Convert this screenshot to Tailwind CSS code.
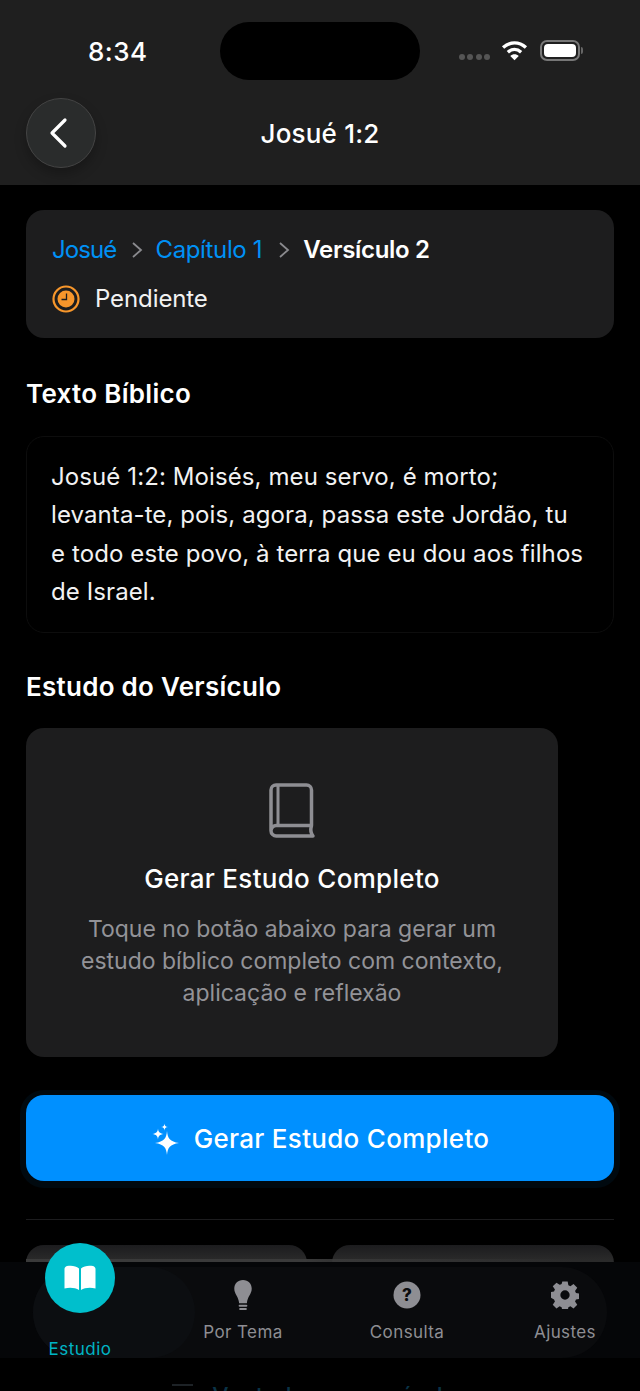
<!DOCTYPE html>
<html lang="pt">
<head>
<meta charset="utf-8">
<script src="https://cdn.jsdelivr.net/npm/@tailwindcss/browser@4"></script>
</head>
<body class="bg-black">
<div class="relative h-[1391px] w-[640px] overflow-hidden bg-black font-['Inter',sans-serif] text-white">
  <header class="relative h-[185px] bg-[#1f1f1f]">
    <div class="flex h-[100px] items-start justify-between pl-[88px] pr-[57px] pt-[22px]">
      <span class="mt-[14px] text-[26px] leading-[32px] font-medium tracking-[0.5px]">8:34</span>
      <div class="absolute left-[220px] top-[22px] h-[58px] w-[200px] rounded-[29px] bg-black"></div>
      <div class="flex items-center pt-[18px]">
        <div class="mt-[13px] flex gap-[2.4px]">
          <i class="size-[6px] rounded-full bg-[#555]"></i><i class="size-[6px] rounded-full bg-[#555]"></i><i class="size-[6px] rounded-full bg-[#555]"></i><i class="size-[6px] rounded-full bg-[#555]"></i>
        </div>
        <svg class="ml-[11px]" width="27" height="21" viewBox="0 0 26 20" fill="none"><path d="M2 7.200C8.600 1.200 17.400 1.200 24 7.200" stroke="#fff" stroke-width="3.200"/><path d="M6.600 11.600C10.600 8 15.400 8 19.400 11.600" stroke="#fff" stroke-width="3.200"/><path d="M13 19.500L8.900 15.300C11.200 13.100 14.800 13.100 17.100 15.300Z" fill="#fff"/></svg>
        <div class="ml-[12px] flex items-center">
          <div class="h-[21px] w-[40px] rounded-[7px] border-2 border-[#777] p-[2px]"><div class="h-full rounded-[4px] bg-white"></div></div>
          <div class="ml-[1px] h-[7px] w-[2px] rounded-r-full bg-[#666]"></div>
        </div>
      </div>
    </div>
    <div class="relative flex h-[70px] items-center justify-center">
      <button class="absolute left-[26px] top-[-2px] flex size-[70px] items-center justify-center rounded-full border border-[#444] bg-[#2a2c2c] shadow-[0_6px_12px_rgba(0,0,0,0.25)]">
        <svg width="24" height="32" viewBox="0 0 24 32" fill="none" class="mr-[5px]"><path d="M18 3L5 16L18 29" stroke="#fff" stroke-width="3.200" stroke-linecap="round" stroke-linejoin="round"/></svg>
      </button>
      <h1 class="mt-[-2px] text-[26px] leading-[32px] font-medium tracking-[0.2px]">Josué 1:2</h1>
    </div>
  </header>

  <main class="flex flex-col px-[26px]">
    <section class="mt-[25px] h-[128px] rounded-[18px] bg-[#1d1d1e] px-[26px] pt-[24px]">
      <div class="flex h-[32px] items-center text-[24px] leading-[32px]">
        <span class="tracking-[-0.9px] text-[#0091f5]">Josué</span>
        <svg class="ml-[15px] mr-[12px]" width="12" height="18" viewBox="0 0 12 18" fill="none"><path d="M2 2L10 9L2 16" stroke="#8a8a8e" stroke-width="1.800"/></svg>
        <span class="tracking-[-0.35px] text-[#0091f5]">Capítulo 1</span>
        <svg class="ml-[16px] mr-[13px]" width="12" height="18" viewBox="0 0 12 18" fill="none"><path d="M2 2L10 9L2 16" stroke="#8a8a8e" stroke-width="1.800"/></svg>
        <span class="font-semibold tracking-[-0.3px]">Versículo 2</span>
      </div>
      <div class="mt-[17px] flex h-[32px] items-center">
        <svg width="28" height="28" viewBox="0 0 28 28"><circle cx="14" cy="14" r="12.500" fill="none" stroke="#f7962b" stroke-width="2.200"/><circle cx="14" cy="14" r="8.500" fill="#f7962b"/><path d="M14.500 8.500V14.500H9.500" fill="none" stroke="#1d1d1e" stroke-width="1.300"/></svg>
        <span class="ml-[15px] text-[24px] leading-[32px] tracking-[-0.1px] text-[#f2f2f2]">Pendiente</span>
      </div>
    </section>

    <h2 class="mt-[40px] h-[32px] text-[26px] leading-[32px] font-semibold tracking-[0.3px]">Texto Bíblico</h2>

    <section class="mt-[26px] h-[197px] rounded-[18px] border border-[#0d0d0d] bg-black pl-[24px] pr-[27px] pt-[21px] text-[24px] leading-[38.400px] tracking-[0.1px] text-[#f2f2f2]">
      Josué 1:2: Moisés, meu servo, é morto; levanta-te, pois, agora, passa este Jordão, tu e todo este povo, à terra que eu dou aos filhos de Israel.
    </section>

    <h2 class="mt-[38px] h-[32px] text-[26px] leading-[32px] font-semibold tracking-[0.27px]">Estudo do Versículo</h2>

    <section class="mt-[25px] flex h-[329px] w-[532px] flex-col items-center rounded-[18px] bg-[#1d1d1e] pt-[52px]">
      <svg width="48" height="60" viewBox="0 0 48 60" fill="none">
        <path d="M3 50.500V10a5 5 0 0 1 5-5H38.500a5 5 0 0 1 5 5V45.500H8.500a5.250 5.250 0 0 0-5.500 5.250a5.250 5.250 0 0 0 5.500 5.250H45c-2.500-3-2.500-7-1.500-10.500" stroke="#8e8e93" stroke-width="3.500" stroke-linejoin="round" stroke-linecap="round"/>
        <path d="M10 5V45" stroke="#8e8e93" stroke-width="3"/>
      </svg>
      <h3 class="mt-[23px] text-[26px] leading-[32px] font-medium tracking-[0.3px]">Gerar Estudo Completo</h3>
      <p class="mt-[18px] w-[470px] text-center text-[23px] leading-[32px] text-[#939398]">Toque no botão abaixo para gerar um estudo bíblico completo com contexto, aplicação e reflexão</p>
    </section>

    <button class="mt-[38px] flex h-[86px] items-center justify-center rounded-[18px] bg-[#0090ff] pt-[2px] shadow-[0_1px_0_6px_rgba(0,145,255,0.06)]">
      <svg width="30" height="36" viewBox="0 0 30 36" fill="#fff" class="mr-[13px]">
        <path d="M16 10C16.600 17.500 19 20.600 28 22C19 23.400 16.600 26.500 16 34C15.400 26.500 13 23.400 4 22C13 20.600 15.400 17.500 16 10Z"/>
        <path d="M7 7.500C7.300 11 8.500 12.300 12.500 13C8.500 13.700 7.300 15 7 18.500C6.700 15 5.500 13.700 1.500 13C5.500 12.300 6.700 11 7 7.500Z"/>
        <path d="M13.500 2.500C13.700 5 14.500 5.800 17 6C14.500 6.200 13.700 7 13.500 9.500C13.300 7 12.500 6.200 10 6C12.500 5.800 13.300 5 13.500 2.500Z"/>
      </svg>
      <span class="text-[26px] leading-[32px] font-medium tracking-[0.3px] text-white">Gerar Estudo Completo</span>
    </button>

    <div class="mt-[38px] h-px bg-[#1c1c1e]"></div>

    <div class="mt-[25px] grid grid-cols-[281px_282px] gap-[25px]">
      <div class="h-[100px] rounded-[18px] bg-gradient-to-b from-[#1c1c1e] to-[#2a2a2a] to-[15px]"></div>
      <div class="h-[100px] rounded-[18px] bg-gradient-to-b from-[#1c1c1e] to-[#2a2a2a] to-[15px]"></div>
    </div>
    <div class="mt-[35px] flex items-center justify-center gap-[18px]">
      <svg width="23" height="24" viewBox="0 0 23 24" fill="none"><path d="M1 1H22" stroke="#1d2226" stroke-width="2"/></svg>
      <p class="text-[23px] leading-[32px] font-medium text-[#0a3347]">Ver todos os versículos</p>
    </div>
  </main>

  <nav class="absolute bottom-0 left-0 h-[131px] w-full">
    <div class="absolute left-[26px] top-[-1px] h-[3px] w-[550px] bg-gradient-to-r from-[#3a3a3a] via-[#3a3a3a] to-transparent"></div>
    <div class="absolute inset-x-0 top-[2px] h-[96px] bg-[#050608]"></div>
    <div class="absolute left-[33px] top-[7px] h-[91px] w-[574px] rounded-[46px] bg-[#0a0b0d]"></div>
    <div class="absolute left-[33px] top-[7px] h-[91px] w-[162px] rounded-[46px] bg-[#0c0e11]"></div>
    <div class="absolute left-[45px] top-[-17px] flex size-[70px] items-center justify-center rounded-full bg-[#00bfcc]">
      <svg width="32" height="26" viewBox="0 0 32 26" fill="#fff"><path d="M15 3.500V25C11.500 22.800 6 22 0.500 23.500V4C0.500 2.500 1.500 1.500 3 1C7.500 0.200 12 0.800 15 3.500Z"/><path d="M17 3.500V25C20.500 22.800 26 22 31.500 23.500V4C31.500 2.500 30.500 1.500 29 1C24.500 0.200 20 0.800 17 3.500Z"/></svg>
    </div>
    <span class="absolute left-[45px] top-[78px] w-[70px] text-center text-[17px] leading-[22px] tracking-[0.5px] text-[#00b4c4]">Estudio</span>
    <div class="absolute left-[203px] top-[20px] flex w-[80px] flex-col items-center">
      <svg width="20" height="31" viewBox="0 0 20 32" fill="#8e8e93"><path d="M10 0C4.500 0 1 4 1 9C1 14.500 5.500 17 6 24H14C14.500 17 19 14.500 19 9C19 4 15.500 0 10 0Z"/><rect x="5.500" y="25.500" width="9" height="2" rx="1"/><rect x="6" y="29" width="8" height="2" rx="1"/></svg>
      <span class="mt-[10px] whitespace-nowrap text-[17px] leading-[22px] tracking-[0.4px] text-[#8e8e93]">Por Tema</span>
    </div>
    <div class="absolute left-[367px] top-[21px] flex w-[80px] flex-col items-center">
      <svg width="28" height="28" viewBox="0 0 28 28"><circle cx="14" cy="14" r="13.500" fill="#8e8e93"/><text x="14" y="20" text-anchor="middle" font-family="Inter" font-size="17" font-weight="800" fill="#0b0c0e">?</text></svg>
      <span class="mt-[12px] text-[17px] leading-[22px] tracking-[0.4px] text-[#8e8e93]">Consulta</span>
    </div>
    <div class="absolute left-[525px] top-[21px] flex w-[80px] flex-col items-center">
      <svg width="28" height="28" viewBox="0 0 24 24" fill="#8e8e93"><path fill-rule="evenodd" d="M9.700 0.500h4.600l.6 3.200c.6.200 1.200.5 1.700.8l2.700-1.900 3.200 3.200-1.900 2.700c.3.500.6 1.100.8 1.700l3.100.6v4.500l-3.100.6c-.2.600-.5 1.200-.8 1.700l1.900 2.700-3.200 3.200-2.700-1.900c-.5.300-1.100.6-1.700.8l-.6 3.200H9.700l-.6-3.200c-.6-.2-1.200-.5-1.700-.8l-2.700 1.900-3.200-3.200 1.900-2.700c-.3-.5-.6-1.100-.8-1.700L-.500 14.100V9.600l3.100-.6c.2-.6.500-1.200.8-1.700L1.500 4.600l3.200-3.200 2.700 1.900c.5-.3 1.100-.6 1.700-.8zM12 8a4 4 0 1 0 0 8 4 4 0 0 0 0-8z"/></svg>
      <span class="mt-[12px] text-[17px] leading-[22px] tracking-[0.4px] text-[#8e8e93]">Ajustes</span>
    </div>
  </nav>
</div>
</body>
</html>
